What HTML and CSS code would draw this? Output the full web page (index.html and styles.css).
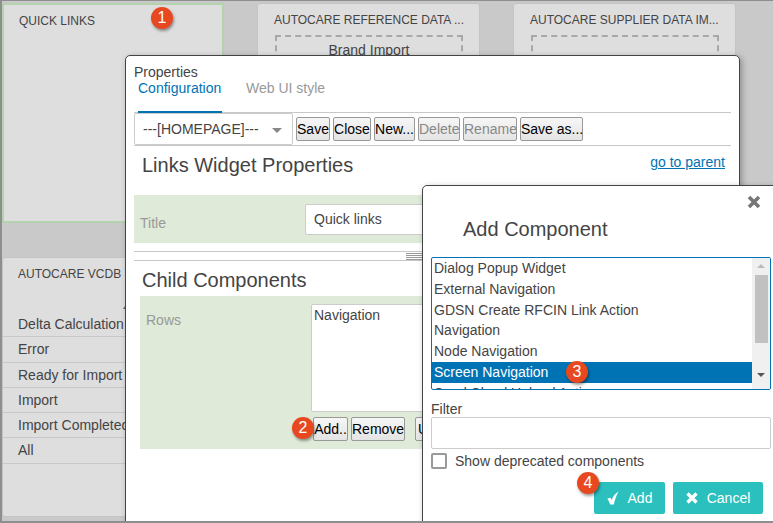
FILE: index.html
```html
<!DOCTYPE html>
<html lang="en">
<head>
    <meta charset="UTF-8">
    <meta name="viewport" content="width=device-width, initial-scale=1.0">
    <link rel="stylesheet" href="styles.css">
    <title>Links Widget Properties</title>
</head>
<body>
    <div class="page">
        <!-- Homepage cards behind the dialogs -->
        <div class="card-grid">
            <div class="card card-active">
                <h4 class="card-title card-title-first">QUICK LINKS</h4>
            </div>
            <div class="card">
                <h4 class="card-title">AUTOCARE REFERENCE DATA ...</h4>
                <div class="drop-box">Brand Import</div>
            </div>
            <div class="card">
                <h4 class="card-title">AUTOCARE SUPPLIER DATA IM...</h4>
                <div class="drop-box"></div>
            </div>
            <div class="card card-list">
                <h4 class="card-title">AUTOCARE VCDB</h4>
                <ul class="status-list">
                    <li>Delta Calculation</li>
                    <li>Error</li>
                    <li>Ready for Import</li>
                    <li>Import</li>
                    <li>Import Completed</li>
                    <li>All</li>
                </ul>
                <span class="sort-mark"></span>
            </div>
        </div>

        <!-- Properties dialog -->
        <div class="window properties">
            <div class="window-label">Properties</div>
            <div class="tabs">
                <a class="tab tab-active" href="#">Configuration</a>
                <a class="tab" href="#">Web UI style</a>
            </div>
            <div class="toolbar">
                <div class="fake-select">---[HOMEPAGE]---<span class="select-caret"></span></div>
                <button class="btn btn-save">Save</button>
                <button class="btn btn-close">Close</button>
                <button class="btn btn-new">New...</button>
                <button class="btn btn-delete" disabled>Delete</button>
                <button class="btn btn-rename" disabled>Rename</button>
                <button class="btn btn-saveas">Save as...</button>
            </div>
            <div class="heading-row">
                <h2 class="section-title">Links Widget Properties</h2>
                <a class="parent-link" href="#">go to parent</a>
            </div>
            <div class="band band-title">
                <label class="band-label">Title</label>
                <div class="text-value">Quick links</div>
            </div>
            <div class="splitter"><span class="grip"></span></div>
            <h2 class="section-title child-title">Child Components</h2>
            <div class="band band-rows">
                <label class="band-label rows-label">Rows</label>
                <div class="rows-col">
                    <div class="rows-box">Navigation</div>
                    <div class="rows-actions">
                        <button class="btn btn-add">Add..</button>
                        <button class="btn btn-rename">Remove</button>
                        <button class="btn btn-up">Up</button>
                    </div>
                </div>
            </div>
        </div>

        <!-- Add Component dialog -->
        <div class="window add-dialog">
            <svg class="close-icon" width="14" height="14" viewBox="0 0 14 14">
                <path d="M2 2L12 12M12 2L2 12" stroke="#777" stroke-width="3.6" fill="none"/>
            </svg>
            <h2 class="section-title add-title">Add Component</h2>
            <div class="list-box">
                <ul class="list-items">
                    <li>Dialog Popup Widget</li>
                    <li>External Navigation</li>
                    <li>GDSN Create RFCIN Link Action</li>
                    <li>Navigation</li>
                    <li>Node Navigation</li>
                    <li class="selected">Screen Navigation</li>
                    <li>Send Cloud Upload Action</li>
                </ul>
                <div class="scrollbar">
                    <span class="arrow arrow-up"></span>
                    <span class="thumb"></span>
                    <span class="arrow arrow-down"></span>
                </div>
            </div>
            <label class="filter-label">Filter</label>
            <div class="filter-input"></div>
            <div class="check-row">
                <span class="check-box"></span>
                <span>Show deprecated components</span>
            </div>
            <div class="dialog-actions">
                <button class="action-btn action-add">
                    <svg width="12" height="14" viewBox="0 0 12 14"><path d="M0.4 7.6L3.4 6.8L4.8 9C5.8 5.6 8 2.2 11.6 0.4C9.6 4 7.8 8.5 6.8 13.6L3.2 13.6Z" fill="#fff"/></svg>
                    Add
                </button>
                <button class="action-btn">
                    <svg width="12" height="12" viewBox="0 0 12 12"><path d="M1.5 1.5L10.5 10.5M10.5 1.5L1.5 10.5" stroke="#fff" stroke-width="3.4" fill="none"/></svg>
                    Cancel
                </button>
            </div>
        </div>

        <!-- Numbered callouts -->
        <span class="badge badge-1">1</span>
        <span class="badge badge-2">2</span>
        <span class="badge badge-3">3</span>
        <span class="badge badge-4">4</span>
    </div>
</body>
</html>
```

FILE: styles.css
```css
* {
    box-sizing: border-box;
}

body {
    margin: 0;
    font-family: "Liberation Sans", Arial, sans-serif;
    font-size: 14px;
    color: #444;
}

.page {
    position: relative;
    width: 773px;
    height: 523px;
    overflow: hidden;
    background-color: #c9c9c9;
    border-top: 1px solid #8e8e8e;
    border-left: 2px solid #8e8e8e;
    border-bottom: 2px solid #8e8e8e;
}

/* cards */
.card-grid {
    display: grid;
    grid-template-columns: 222px 223px 223px;
    grid-template-rows: 220px 260px;
    column-gap: 33px;
    row-gap: 34px;
    padding-top: 2px;
}

.card {
    position: relative;
    background-color: #dedede;
    border: 1px solid #c4c4c4;
    border-radius: 3px;
}

.card-active {
    border: 2px solid #b4d2ad;
    border-radius: 0;
}

.card-title {
    margin: 9px 16px 0;
    font-size: 12px;
    line-height: 15px;
    font-weight: normal;
    white-space: nowrap;
}

.card-title-first {
    margin: 9px 15px 0;
}

.card-list .card-title {
    margin-left: 15px;
}

.drop-box {
    margin: 7px 16px 0 17px;
    height: 150px;
    border: 2px dashed #a8a8a8;
    text-align: center;
    padding-top: 5px;
    line-height: 16px;
}

.status-list {
    list-style: none;
    margin: 30px 0 0;
    padding: 0;
}

.status-list li {
    height: 25.3px;
    line-height: 24px;
    padding-left: 15px;
    border-bottom: 1px solid #c8c8c8;
    white-space: nowrap;
}

/* sliver of a caret the dialog covers */
.sort-mark {
    position: absolute;
    left: 120px;
    top: 45px;
    border-left: 4px solid transparent;
    border-right: 4px solid transparent;
    border-bottom: 6px solid #666;
}

/* dialogs */
.window {
    position: absolute;
    background-color: #fff;
    border: 1px solid #444;
    border-radius: 5px 5px 0 0;
    box-shadow: 2px 2px 6px rgba(0, 0, 0, 0.3);
}

.properties {
    left: 123px;
    top: 54px;
    width: 615px;
    height: 470px;
    padding: 8px 8px 0;
}

.window-label {
    line-height: 16px;
}

.tabs {
    display: flex;
    height: 33px;
    padding-left: 4px;
    gap: 24px;
    border-bottom: 1px solid #c8c8c8;
}

.tab {
    height: 34px;
    color: #999;
    text-decoration: none;
    line-height: 16px;
}

.tab-active {
    width: 84px;
    color: #0073b5;
    border-bottom: 3px solid #0073b5;
}

.toolbar {
    display: flex;
    align-items: center;
    height: 33px;
    gap: 3px;
    border-bottom: 1px solid #c8c8c8;
}

.fake-select {
    position: relative;
    width: 159px;
    height: 32px;
    padding-left: 8px;
    line-height: 30px;
    background-color: #fff;
    border: 1px solid #ccc;
    border-radius: 2px;
}

.select-caret {
    position: absolute;
    right: 10px;
    top: 14px;
    border-left: 5px solid transparent;
    border-right: 5px solid transparent;
    border-top: 5px solid #888;
}

.btn {
    height: 24px;
    padding: 0;
    font-family: inherit;
    font-size: 14px;
    color: #000;
    white-space: nowrap;
    background: linear-gradient(#f6f6f6, #e4e4e4);
    border: 1px solid #999;
    border-radius: 2px;
}

.btn:disabled {
    color: #888;
}

.btn-save { width: 34px; }
.btn-close { width: 38px; }
.btn-new { width: 41px; }
.btn-delete { width: 42px; }
.btn-rename { width: 54px; }
.btn-saveas { width: 63px; }
.btn-add { width: 35px; }

.btn-up {
    width: 40px;
    margin-left: 7px;
    padding-left: 2px;
    text-align: left;
}

.heading-row {
    display: flex;
    justify-content: space-between;
    height: 49px;
    padding: 7px 6px 0 8px;
}

.section-title {
    margin: 0;
    font-size: 20px;
    line-height: 24px;
    font-weight: normal;
}

.parent-link {
    color: #0073b5;
    line-height: 18px;
}

.band {
    display: flex;
    background-color: #dfead8;
}

.band-title {
    height: 48px;
    padding: 9px 0 0 6px;
}

.band-label {
    width: 165px;
    color: #999;
    line-height: 18px;
}

.band-title .band-label {
    padding-top: 10px;
}

.text-value {
    width: 300px;
    height: 31px;
    padding-left: 8px;
    line-height: 28px;
    background-color: #fff;
    border: 1px solid #ccc;
    border-radius: 2px;
}

.splitter {
    position: relative;
    height: 10px;
    margin-top: 8px;
    border-top: 1px solid #c8c8c8;
    border-bottom: 1px solid #c8c8c8;
}

.grip {
    position: absolute;
    left: 272px;
    top: 1px;
    width: 18px;
    height: 7px;
    background: repeating-linear-gradient(#999 0, #999 1px, #fff 1px, #fff 2px);
}

.child-title {
    margin: 7px 0 4px 8px;
}

.band-rows {
    height: 153px;
    margin-left: 6px;
    padding: 8px 0 0 6px;
}

.rows-label {
    width: 165px;
    padding-top: 7px;
}

.rows-box {
    width: 300px;
    height: 108px;
    padding: 2px 2px;
    line-height: 17px;
    background-color: #fff;
    border: 1px solid #ccc;
    border-radius: 2px;
}

.rows-actions {
    display: flex;
    gap: 3px;
    margin: 5px 0 0 2px;
}

.add-dialog {
    left: 420px;
    top: 184px;
    width: 360px;
    height: 340px;
    padding: 0 8px;
}

.close-icon {
    position: absolute;
    left: 324px;
    top: 9px;
}

.add-title {
    margin: 31px 0 0 32px;
}

.list-box {
    display: flex;
    width: 340px;
    height: 133px;
    margin-top: 16px;
    overflow: hidden;
    border: 1px solid #0073b5;
    border-radius: 2px;
}

.list-items {
    list-style: none;
    flex: 1;
    margin: 0;
    padding: 0;
}

.list-items li {
    height: 20.8px;
    line-height: 20.8px;
    padding-left: 2px;
    white-space: nowrap;
}

.list-items .selected {
    color: #fff;
    background-color: #0073b5;
}

.scrollbar {
    display: flex;
    flex-direction: column;
    align-items: center;
    width: 18px;
    background-color: #f0f0f0;
}

.arrow {
    border-left: 4px solid transparent;
    border-right: 4px solid transparent;
}

.arrow-up {
    margin-top: 6px;
    border-bottom: 4px solid #bbb;
}

.arrow-down {
    margin-top: 30px;
    border-top: 4px solid #555;
}

.thumb {
    width: 13px;
    height: 68px;
    margin-top: 7px;
    background-color: #c1c1c1;
}

.filter-label {
    display: block;
    margin-top: 11px;
    line-height: 16px;
}

.filter-input {
    width: 340px;
    height: 32px;
    border: 1px solid #ccc;
    border-radius: 2px;
}

.check-row {
    display: flex;
    align-items: center;
    gap: 8px;
    height: 16px;
    margin-top: 4px;
}

.check-box {
    width: 16px;
    height: 16px;
    border: 2px solid #999;
    border-radius: 2px;
}

.dialog-actions {
    display: flex;
    gap: 8px;
    margin: 13px 0 0 163px;
}

.action-btn {
    display: flex;
    align-items: center;
    justify-content: center;
    gap: 9px;
    width: 90px;
    height: 32px;
    padding: 0;
    font-family: inherit;
    font-size: 14px;
    color: #fff;
    background-color: #2bbfbd;
    border: none;
    border-radius: 2px;
}

.action-add {
    width: 71px;
}

/* callouts */
.badge {
    position: absolute;
    width: 22px;
    height: 22px;
    border-radius: 50%;
    text-align: center;
    line-height: 22px;
    font-size: 16px;
    color: #fff;
    background-color: #e8481f;
    box-shadow: 1px 2px 3px rgba(0, 0, 0, 0.4);
}

.badge-1 { left: 149px; top: 6px; }
.badge-2 { left: 290px; top: 416px; }
.badge-3 { left: 564px; top: 360px; }
.badge-4 { left: 575px; top: 471px; }
```
